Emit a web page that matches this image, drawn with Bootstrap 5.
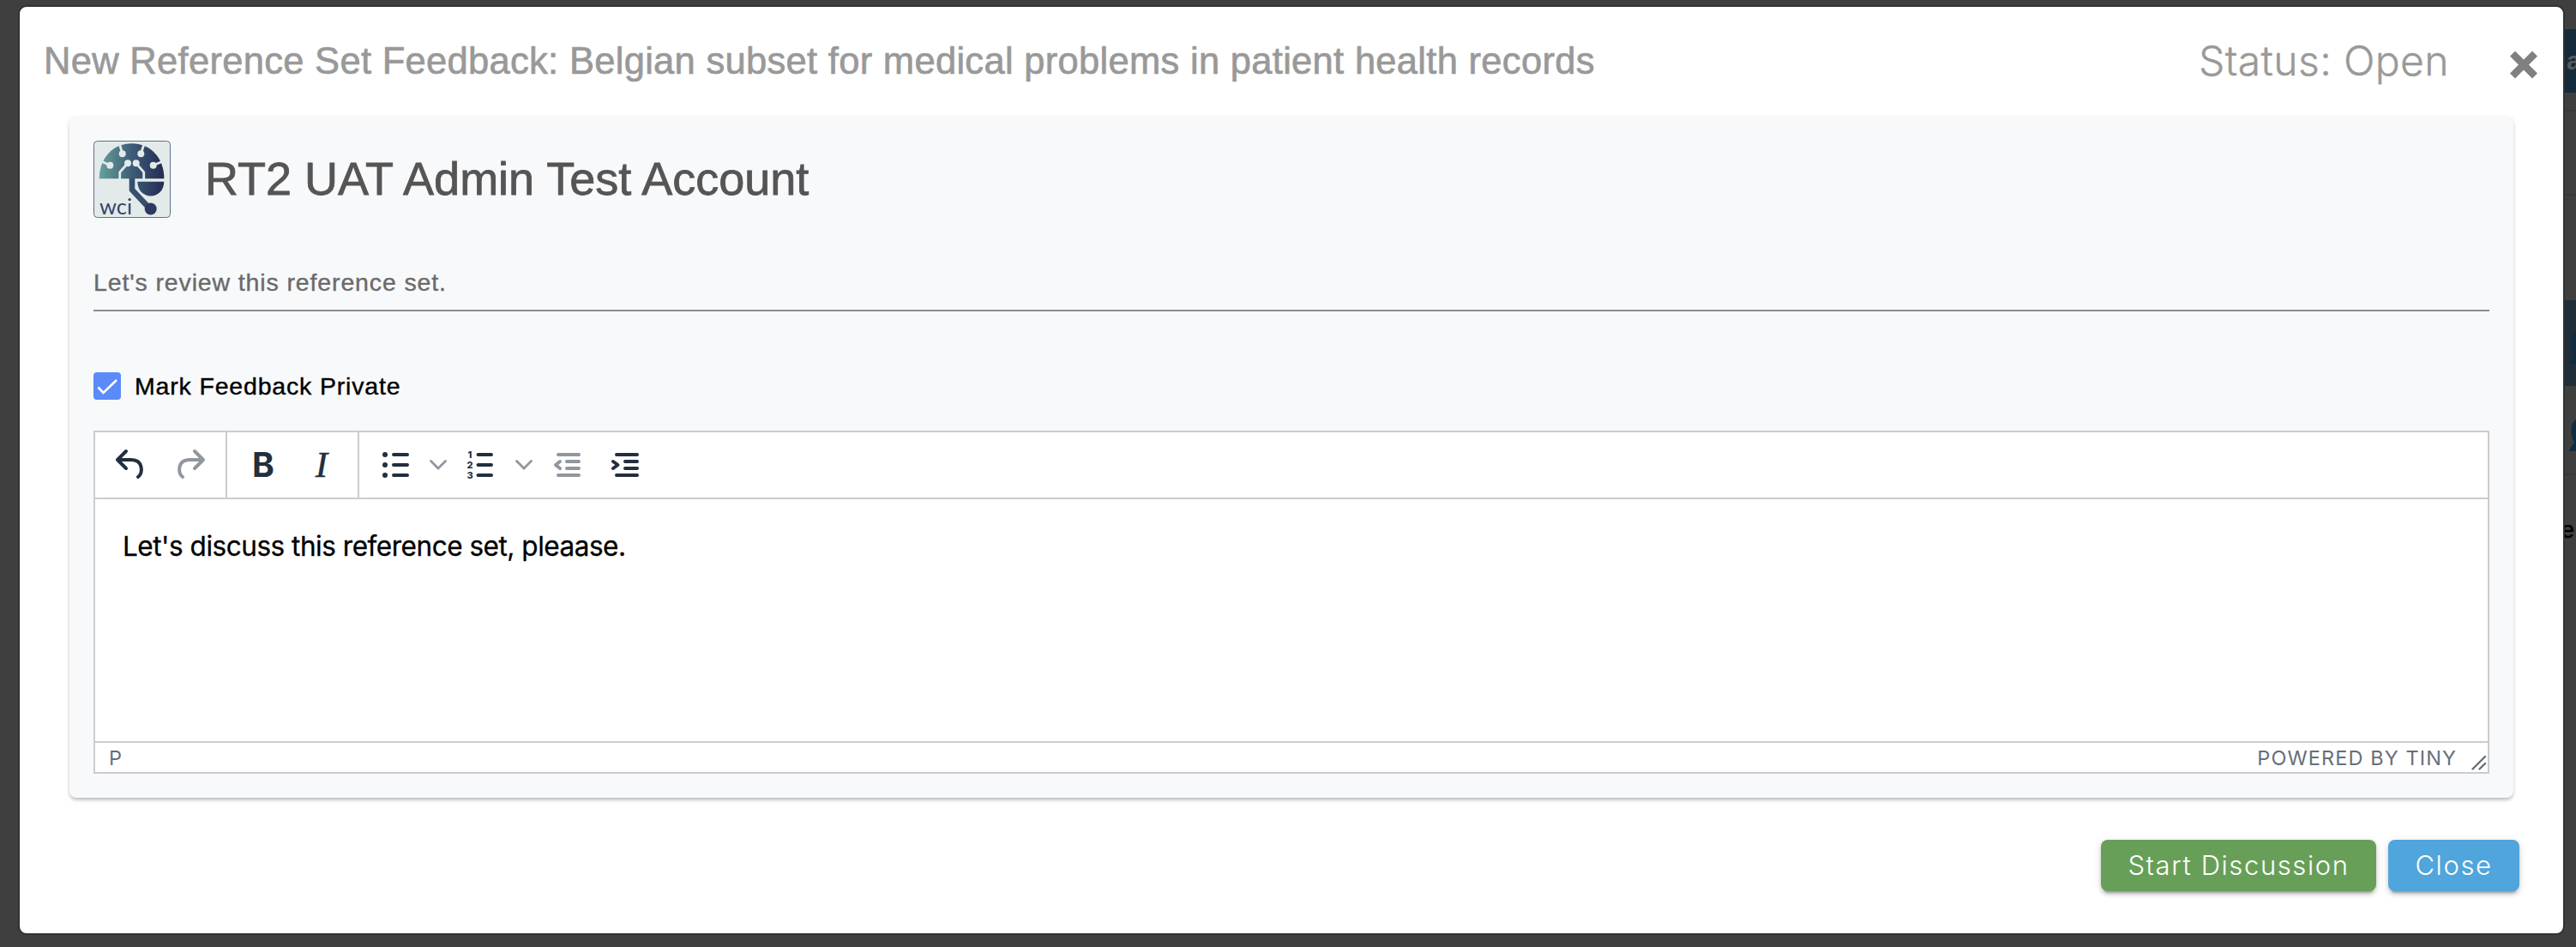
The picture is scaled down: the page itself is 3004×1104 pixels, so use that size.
<!DOCTYPE html>
<html lang="en">
<head>
    <meta charset="UTF-8">
    <meta name="viewport" content="width=device-width, initial-scale=1.0">
    <link rel="stylesheet" href="https://cdn.jsdelivr.net/npm/bootstrap@5.3.0/dist/css/bootstrap.min.css">
    <title>Reference Set Feedback</title>
    <style>
        body {
            background: #3f3f3f;
            font-family: "Liberation Sans", Arial, sans-serif;
            height: 1104px;
            overflow: hidden;
        }
        /* slice of the dimmed page that shows beside the dialog */
        .page-behind {
            position: absolute;
            top: 0;
            right: 0;
        }
        .feedback-dialog {
            margin: 6px 13px 0 21px;
            height: 1084px;
            border: 2px solid #323232;
            border-radius: 10px;
            position: relative;
        }
        .dialog-head {
            height: 128px;
            padding: 0 30px 0 28px;
            color: #999;
        }
        .dialog-title {
            font-size: 43.5px;
            line-height: 50px;
            margin: 38px 0 0 0;
            letter-spacing: 0.3px;
            -webkit-text-stroke: 0.7px #999;
        }
        .dialog-status {
            font-family: Inter, sans-serif;
            font-weight: 300;
            font-size: 48px;
            line-height: 56px;
            margin: 35px 71px 0 0;
            letter-spacing: 0.4px;
            -webkit-text-stroke: 0.4px #999;
        }
        .close-x {
            margin-top: 51px;
        }
        .feedback-card {
            margin: 0 58px;
            height: 794px;
            padding: 28px;
            border: 0;
            border-radius: 8px;
            background: #f8f9fb;
            box-shadow: 0 4px 4px -2px rgba(0, 0, 0, .16), 0 2px 4px rgba(0, 0, 0, .1), 0 2px 6px rgba(0, 0, 0, .08);
        }
        .user-name {
            font-size: 54px;
            line-height: 60px;
            margin: -2px 0 0 40px;
            color: #555;
            -webkit-text-stroke: 0.8px #555;
        }
        .subject-line {
            height: 109px;
            padding-top: 58px;
            border-bottom: 2px solid #8c8c8c;
            font-size: 28.5px;
            line-height: 34px;
            color: #6b6b6b;
            letter-spacing: 0.87px;
            -webkit-text-stroke: 0.4px #6b6b6b;
        }
        .private-row {
            margin-top: 71px;
            height: 32px;
            gap: 16px;
            font-size: 28.5px;
            line-height: 32px;
            color: #000;
            letter-spacing: 0.83px;
            -webkit-text-stroke: 0.4px #000;
        }
        .editor {
            margin-top: 36px;
            height: 400px;
            border: 2px solid #ccc;
            background: #fff;
            font-family: Inter, sans-serif;
        }
        .editor-toolbar {
            height: 76px;
            box-sizing: content-box;
            border-bottom: 2px solid #ccc;
            color: #222f3e;
        }
        .tool-group {
            padding: 0 18px;
            gap: 20px;
            border-right: 2px solid #ccc;
        }
        .tool-group:last-child {
            border-right: 0;
        }
        .tool-off {
            color: #90979e;
        }
        .tool-letter {
            width: 48px;
            text-align: center;
            line-height: 48px;
        }
        .letter-b {
            font: bold 39px/48px Inter, sans-serif;
        }
        .letter-i {
            font: italic 43px/48px "Liberation Serif", serif;
            -webkit-text-stroke: 0.5px #222f3e;
        }
        .editor-body {
            padding: 33px 32px;
            font-size: 31.5px;
            line-height: 44px;
            color: #000;
            letter-spacing: -0.47px;
            -webkit-text-stroke: 0.3px #000;
        }
        .editor-status {
            height: 36px;
            box-sizing: border-box;
            border-top: 2px solid #ccc;
            padding: 0 1px 0 16px;
            font-size: 23.5px;
            line-height: 36px;
            color: #666f7b;
        }
        .powered {
            letter-spacing: 1.1px;
            margin-right: 17px;
        }
        .dialog-foot {
            padding: 49px 51px 0 0;
            gap: 14px;
        }
        .act {
            height: 60px;
            padding: 0;
            border: 0;
            border-radius: 8px;
            color: #fff;
            font-family: Inter, sans-serif;
            font-weight: 300;
            font-size: 31px;
            line-height: 60px;
            letter-spacing: 1.6px;
            box-shadow: 0 6px 2px -4px rgba(0, 0, 0, .2), 0 4px 4px rgba(0, 0, 0, .14), 0 2px 10px rgba(0, 0, 0, .12);
        }
        .act-start {
            width: 321px;
            background: #689f58;
        }
        .act-close {
            width: 153px;
            background: #50a5dc;
        }
    </style>
</head>
<body>
    <svg class="page-behind" width="15" height="1104" viewBox="0 0 15 1104" aria-hidden="true">
        <rect y="34" width="15" height="74" fill="#152b3b"/>
        <text x="4" y="81" font-size="30" font-family="Liberation Sans" font-weight="bold" fill="#5a5a5a">a</text>
        <path d="M0 129h15M0 227h15M0 553h15" stroke="#383838" stroke-width="2"/>
        <rect y="350" width="15" height="100" fill="#202e39"/>
        <g fill="none" stroke="#0d2d42" stroke-width="6">
            <path d="M17 389c-6 4-6 19 0 24l-5 8h6"/>
            <path d="M17 491c-6 4-6 19 0 24l-5 8h6"/>
        </g>
        <text x="-2" y="627" font-size="27" font-family="Liberation Sans" fill="#000" stroke="#000" stroke-width=".6">e</text>
    </svg>

    <div class="feedback-dialog bg-white">
        <div class="dialog-head d-flex align-items-start">
            <div class="dialog-title me-auto">New Reference Set Feedback: Belgian subset for medical problems in patient health records</div>
            <div class="dialog-status">Status: Open</div>
            <svg class="close-x" width="32" height="33" viewBox="0 0 32 33">
                <path d="M6 6.500l20 20M26 6.500l-20 20" stroke="#808080" stroke-width="8.500" stroke-linecap="square"/>
            </svg>
        </div>

        <div class="feedback-card card">
            <div class="d-flex align-items-center">
                <svg width="90" height="90" viewBox="0 0 90 90">
                    <defs>
                        <linearGradient id="brain" gradientUnits="userSpaceOnUse" x1="7" y1="0" x2="82" y2="0">
                            <stop offset="0" stop-color="#68a09a"/>
                            <stop offset=".5" stop-color="#3d5d77"/>
                            <stop offset="1" stop-color="#262b55"/>
                        </linearGradient>
                    </defs>
                    <rect x=".5" y=".5" width="89" height="89" rx="4" fill="#e3ebea" stroke="#5f6f8c"/>
                    <path d="M6.800 44.300C6.800 20 23 3.300 44.700 3.300S82.400 20 82.400 44.300z" fill="url(#brain)"/>
                    <path d="M51.300 47.700h31c0 10-7 16.800-15.500 16.800s-15.500-6.800-15.500-16.800z" fill="url(#brain)"/>
                    <path d="M41.700 44h6.600v12l18 19-4.500 5-20.100-21.500z" fill="#37506f"/>
                    <circle cx="66.700" cy="79.500" r="7" fill="#2c3a60"/>
                    <g fill="none" stroke="#e3ebea" stroke-width="2.800">
                        <path d="M30.700 45v-8.300l9.300-10.400M58.700 45v-8.300l-9-10.400M33.700 15.300L30.500 4M55.300 15.300L59 4M19.300 28.700L9 24M69.700 28.700L81 24"/>
                    </g>
                    <g fill="#e3ebea">
                        <circle cx="40" cy="26.300" r="4"/><circle cx="49.700" cy="26.300" r="4"/>
                        <circle cx="33.700" cy="15.300" r="4"/><circle cx="55.300" cy="15.300" r="4"/>
                        <circle cx="19.300" cy="28.700" r="4"/><circle cx="69.700" cy="28.700" r="4"/>
                    </g>
                    <text x="7" y="86" font-family="Lato" font-size="25" textLength="38" lengthAdjust="spacingAndGlyphs" fill="#34456b">wci</text>
                </svg>
                <div class="user-name">RT2 UAT Admin Test Account</div>
            </div>

            <div class="subject-line">Let's review this reference set.</div>

            <div class="private-row d-flex align-items-center">
                <svg width="32" height="32" viewBox="0 0 32 32">
                    <rect width="32" height="32" rx="4" fill="#5b8bf9"/>
                    <path d="M5.500 17.500l6 6.500L27 9" fill="none" stroke="#fff" stroke-width="2.600"/>
                </svg>
                <span>Mark Feedback Private</span>
            </div>

            <div class="editor d-flex flex-column">
                <div class="editor-toolbar d-flex">
                    <div class="tool-group d-flex align-items-center">
                        <svg width="48" height="48" viewBox="0 0 24 24" fill="none" stroke="currentColor" stroke-width="2" stroke-linecap="round" stroke-linejoin="round">
                            <path d="M9 4L4 9l5 5M4.500 9H12c3.300 0 5.300 1.700 5.800 4.300.5 2.400-.3 4.900-1.800 5.700"/>
                        </svg>
                        <svg class="tool-off" width="48" height="48" viewBox="0 0 24 24" fill="none" stroke="currentColor" stroke-width="2" stroke-linecap="round" stroke-linejoin="round">
                            <path d="M15 4l5 5-5 5M19.500 9H12c-3.300 0-5.300 1.700-5.800 4.300-.5 2.400.3 4.900 1.800 5.700"/>
                        </svg>
                    </div>
                    <div class="tool-group d-flex align-items-center">
                        <span class="tool-letter letter-b">B</span>
                        <span class="tool-letter letter-i">I</span>
                    </div>
                    <div class="tool-group d-flex align-items-center gap-0">
                        <svg width="48" height="48" viewBox="0 0 48 48" stroke="currentColor" stroke-width="4" stroke-linecap="round">
                            <path d="M22 12h16M22 24h16M22 36h16"/>
                            <g fill="currentColor" stroke="none"><circle cx="12" cy="12" r="3"/><circle cx="12" cy="24" r="3"/><circle cx="12" cy="36" r="3"/></g>
                        </svg>
                        <svg class="tool-off" width="52" height="48" viewBox="0 0 52 48" fill="none" stroke="currentColor" stroke-width="2.800" stroke-linecap="round">
                            <path d="M17.500 19.500l8.500 8.500 8.500-8.500"/>
                        </svg>
                        <svg width="48" height="48" viewBox="0 0 48 48" stroke="currentColor" stroke-width="4" stroke-linecap="round">
                            <path d="M20.500 12h15.500M20.500 24h15.500M20.500 36h15.500"/>
                            <g fill="currentColor" stroke="none" font-family="Inter" font-weight="800" font-size="11" text-anchor="middle">
                                <text x="11" y="16">1</text><text x="11" y="28">2</text><text x="11" y="40">3</text>
                            </g>
                        </svg>
                        <svg class="tool-off" width="52" height="48" viewBox="0 0 52 48" fill="none" stroke="currentColor" stroke-width="2.800" stroke-linecap="round">
                            <path d="M17.500 19.500l8.500 8.500 8.500-8.500"/>
                        </svg>
                        <svg class="tool-off" width="48" height="48" viewBox="0 0 48 48" fill="none" stroke="currentColor" stroke-width="4" stroke-linecap="round">
                            <path d="M14 12h24M24 20h14M24 28h14M14 36h24"/>
                            <path d="M16 20l-5 4 5 4" stroke-linejoin="round"/>
                        </svg>
                        <svg class="indent-tool" width="68" height="48" viewBox="-20 0 68 48" fill="none" stroke="currentColor" stroke-width="4" stroke-linecap="round">
                            <path d="M14 12h24M24 20h14M24 28h14M14 36h24"/>
                            <path d="M10 20l5.500 4-5.500 4" stroke-linejoin="round"/>
                        </svg>
                    </div>
                </div>
                <div class="editor-body flex-grow-1">Let's discuss this reference set, pleaase.</div>
                <div class="editor-status d-flex">
                    <span class="me-auto">P</span>
                    <span class="powered">POWERED BY TINY</span>
                    <svg class="align-self-end" width="18" height="20" viewBox="0 0 18 20" stroke="#666f7b" stroke-width="2.400" stroke-linecap="round">
                        <path d="M1.500 16.500l14.500-14.500M9.500 16.500l6.500-6.500"/>
                    </svg>
                </div>
            </div>
        </div>

        <div class="dialog-foot d-flex justify-content-end">
            <button type="button" class="btn act act-start">Start Discussion</button>
            <button type="button" class="btn act act-close">Close</button>
        </div>
    </div>

    <script src="https://cdn.jsdelivr.net/npm/bootstrap@5.3.0/dist/js/bootstrap.bundle.min.js"></script>
</body>
</html>
